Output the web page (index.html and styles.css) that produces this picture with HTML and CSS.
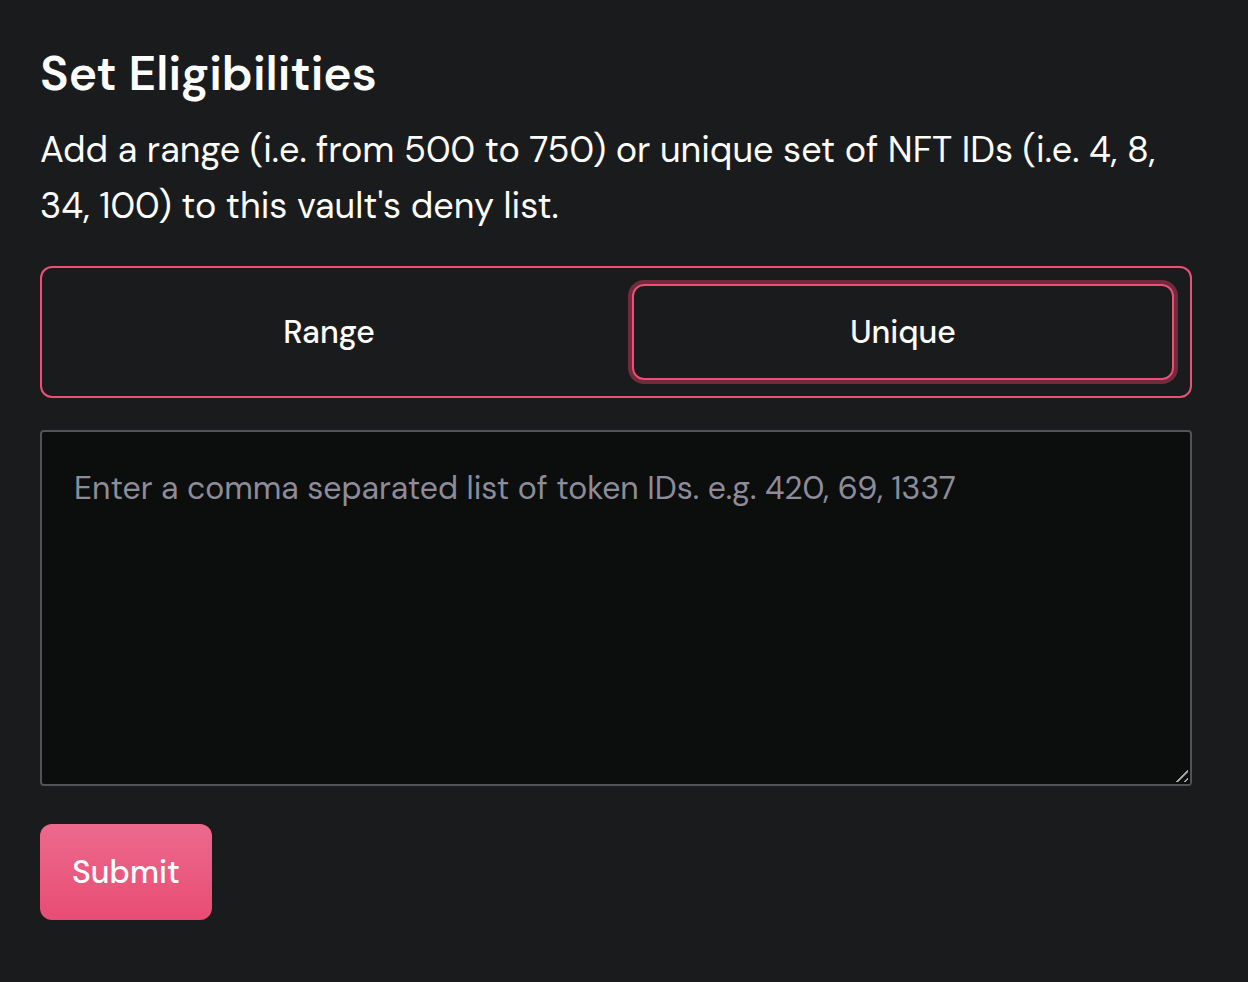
FILE: index.html
```html
<!DOCTYPE html>
<html lang="en">
<head>
<meta charset="utf-8">
<meta name="viewport" content="width=device-width, initial-scale=1">
<title>Set Eligibilities</title>
<link rel="stylesheet" href="styles.css">
</head>
<body>
<main class="panel">
  <h1 class="title">Set Eligibilities</h1>
  <p class="description">Add a range (i.e. from 500 to 750) or unique set of NFT IDs (i.e. 4, 8, 34, 100) to this vault's deny list.</p>
  <form class="form">
    <div class="switch">
      <button class="option" type="button" aria-pressed="false">Range</button>
      <button class="option option-active" type="button" aria-pressed="true">Unique</button>
    </div>
    <textarea class="ids" aria-label="Token IDs" placeholder="Enter a comma separated list of token IDs. e.g. 420, 69, 1337"></textarea>
    <button class="submit" type="submit">Submit</button>
  </form>
</main>
</body>
</html>
```
FILE: styles.css
```css
* {
  box-sizing: border-box;
}

body {
  margin: 0;
  background: #1a1b1d;
  color: #fff;
  font-family: "DM Sans", Inter, sans-serif;
}

.panel {
  padding: 44px 56px 62px 40px;
}

.title {
  margin: 0;
  font-size: 48px;
  line-height: 60px;
  font-weight: 600;
}

.description {
  margin: 18px 0 32px;
  font-size: 36px;
  line-height: 56px;
}

.form {
  display: flex;
  flex-direction: column;
  align-items: flex-start;
}

.switch {
  display: grid;
  grid-template-columns: 1fr 1fr;
  gap: 32px;
  width: 100%;
  padding: 16px;
  border: 2px solid #ec4f77;
  border-radius: 12px;
}

.option {
  height: 96px;
  border: 2px solid transparent;
  border-radius: 12px;
  background: transparent;
  color: inherit;
  font: 500 32px/48px "DM Sans", Inter, sans-serif;
}

.option-active {
  border-color: #ec4f77;
  box-shadow: 0 0 0 4px #712b3d;
}

.ids {
  width: 100%;
  height: 356px;
  margin: 32px 0 38px;
  padding: 32px;
  border: 2px solid #525258;
  border-radius: 4px;
  background: #0c0e0d;
  color: #fff;
  font: 400 32px/48px "DM Sans", Inter, sans-serif;
  resize: vertical;
}

.ids::placeholder {
  color: #8e8c99;
}

.ids::-webkit-resizer {
  background: linear-gradient(135deg, transparent 45%, #aaa 46%, #aaa 53%, transparent 54%, transparent 71%, #aaa 72%, #aaa 79%, transparent 80%) 0 0 / 15px 15px no-repeat;
  border: solid #0c0e0d;
  border-width: 0 2px 2px 0;
}

.submit {
  height: 96px;
  padding: 0 32px;
  border: 0;
  border-radius: 12px;
  background: linear-gradient(#ec6a8d, #e84c74);
  color: #fff;
  font: 500 32px/48px "DM Sans", Inter, sans-serif;
}
```
